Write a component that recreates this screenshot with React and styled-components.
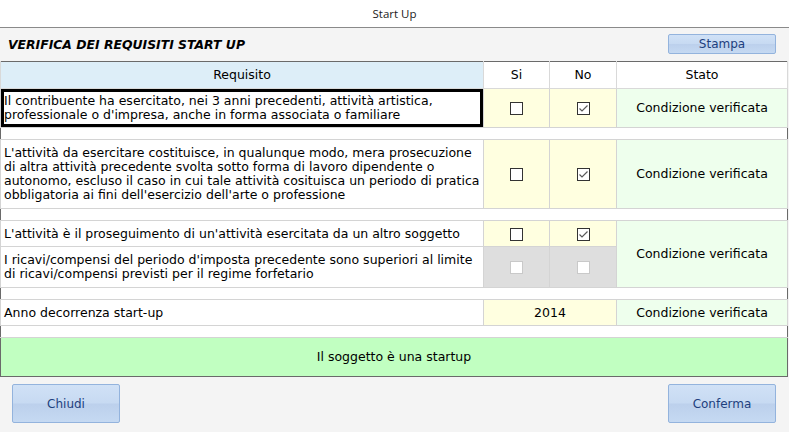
import React from "react";
import styled, { createGlobalStyle } from "styled-components";

const GlobalStyle = createGlobalStyle`
  body {
    margin: 0;
    background: #f4f4f4;
    font-family: "DejaVu Sans", Verdana, sans-serif;
    color: #000;
  }
`;

const Window = styled.div`
  width: 789px;
  height: 432px;
  display: flex;
  flex-direction: column;
  background: #f4f4f4;
  overflow: hidden;
`;

const TitleBar = styled.div`
  height: 27px;
  background: #fff;
  border-bottom: 1px solid #8a8a8a;
  display: flex;
  align-items: center;
  justify-content: center;
  font-family: "Open Sans", "Noto Sans", sans-serif;
  font-size: 11.5px;
  color: #222;
`;

const Toolbar = styled.div`
  height: 32px;
  display: flex;
  align-items: center;
  justify-content: space-between;
  padding: 0 13px 1px 8px;
`;

const Heading = styled.h1`
  margin: 0;
  font-size: 12.4px;
  font-weight: 700;
  font-style: italic;
`;

const Button = styled.button`
  width: ${(p) => p.$w || 108}px;
  height: ${(p) => p.$h || 20}px;
  padding: 0;
  border: 1px solid #93b3dd;
  border-radius: 2px;
  background: linear-gradient(#d0e1f6 0%, #c7daf2 48%, #bcd0ec 52%, #c5d9f2 100%);
  font-family: "DejaVu Sans", Verdana, sans-serif;
  font-size: 12px;
  color: #1d3f7e;
  cursor: pointer;
`;

const Grid = styled.table`
  width: 788px;
  border-collapse: collapse;
  table-layout: fixed;
  border: 1px solid #6a6a6a;
  background: #fff;
  font-size: 12.5px;
  line-height: 14px;
`;

const HeadCell = styled.th`
  height: 26px;
  padding: 0;
  font-weight: 400;
  background: ${(p) => p.$bg || "#fff"};
  border: 1px solid #d9d9d9;
  border-top: none;
`;

const Cell = styled.td`
  height: ${(p) => p.$h}px;
  padding: 0 0 0 3px;
  border: 1px solid #d4d4d4;
  white-space: nowrap;
  vertical-align: middle;
  box-shadow: ${(p) => (p.$focused ? "inset 0 0 0 3px #000" : "none")};
`;

const CheckCell = styled.td`
  padding: 0;
  border: 1px solid #d4d4d4;
  text-align: center;
  vertical-align: middle;
  background: ${(p) => (p.$disabled ? "#dedede" : "#ffffe0")};
`;

const StatusCell = styled.td`
  padding: 0;
  border: 1px solid #d4d4d4;
  text-align: center;
  vertical-align: middle;
  background: #eeffed;
`;

const YearCell = styled(CheckCell)``;

const Spacer = styled.td`
  height: 11px;
  padding: 0;
  border: 1px solid #d4d4d4;
  border-left: none;
  border-right: none;
`;

const Banner = styled.td`
  height: 38px;
  padding: 0;
  text-align: center;
  vertical-align: middle;
  background: #c1ffc1;
  border-top: 1px solid #d4d4d4;
`;

const Box = styled.span`
  display: inline-flex;
  width: 13px;
  height: 13px;
  box-sizing: border-box;
  border: 1px solid ${(p) => (p.$disabled ? "#c9c9c9" : "#333")};
  background: #fff;
  vertical-align: middle;
  align-items: center;
  justify-content: center;
`;

const Footer = styled.div`
  display: flex;
  justify-content: space-between;
  padding: 7px 13px 0 12px;
`;

function Check({ checked, disabled }) {
  return (
    <Box $disabled={disabled}>
      {checked && (
        <svg width="11" height="11" viewBox="0 0 11 11">
          <path d="M1.5 5.5 L4 8 L9.5 2.5" fill="none" stroke="#5a5a5a" strokeWidth="1.2" />
        </svg>
      )}
    </Box>
  );
}

const OK = "Condizione verificata";

export default function App() {
  return (
    <Window>
      <GlobalStyle />
      <TitleBar>Start Up</TitleBar>
      <Toolbar>
        <Heading>VERIFICA DEI REQUISITI START UP</Heading>
        <Button>Stampa</Button>
      </Toolbar>
      <Grid>
        <colgroup>
          <col style={{ width: 483 }} />
          <col style={{ width: 66 }} />
          <col style={{ width: 67 }} />
          <col />
        </colgroup>
        <thead>
          <tr>
            <HeadCell $bg="#ddeef8">Requisito</HeadCell>
            <HeadCell>Si</HeadCell>
            <HeadCell>No</HeadCell>
            <HeadCell>Stato</HeadCell>
          </tr>
        </thead>
        <tbody>
          <tr>
            <Cell $h={38} $focused>
              Il contribuente ha esercitato, nei 3 anni precedenti, attività artistica,
              <br />
              professionale o d'impresa, anche in forma associata o familiare
            </Cell>
            <CheckCell><Check /></CheckCell>
            <CheckCell><Check checked /></CheckCell>
            <StatusCell>{OK}</StatusCell>
          </tr>
          <tr><Spacer colSpan={4} /></tr>
          <tr>
            <Cell $h={68}>
              L'attività da esercitare costituisce, in qualunque modo, mera prosecuzione
              <br />
              di altra attività precedente svolta sotto forma di lavoro dipendente o
              <br />
              autonomo, escluso il caso in cui tale attività cosituisca un periodo di pratica
              <br />
              obbligatoria ai fini dell'esercizio dell'arte o professione
            </Cell>
            <CheckCell><Check /></CheckCell>
            <CheckCell><Check checked /></CheckCell>
            <StatusCell>{OK}</StatusCell>
          </tr>
          <tr><Spacer colSpan={4} /></tr>
          <tr>
            <Cell $h={25}>L'attività è il proseguimento di un'attività esercitata da un altro soggetto</Cell>
            <CheckCell><Check /></CheckCell>
            <CheckCell><Check checked /></CheckCell>
            <StatusCell rowSpan={2}>{OK}</StatusCell>
          </tr>
          <tr>
            <Cell $h={40}>
              I ricavi/compensi del periodo d'imposta precedente sono superiori al limite
              <br />
              di ricavi/compensi previsti per il regime forfetario
            </Cell>
            <CheckCell $disabled><Check disabled /></CheckCell>
            <CheckCell $disabled><Check disabled /></CheckCell>
          </tr>
          <tr><Spacer colSpan={4} /></tr>
          <tr>
            <Cell $h={25}>Anno decorrenza start-up</Cell>
            <YearCell colSpan={2}>2014</YearCell>
            <StatusCell>{OK}</StatusCell>
          </tr>
          <tr><Spacer colSpan={4} /></tr>
          <tr>
            <Banner colSpan={4}>Il soggetto è una startup</Banner>
          </tr>
        </tbody>
      </Grid>
      <Footer>
        <Button $h={39}>Chiudi</Button>
        <Button $h={39}>Conferma</Button>
      </Footer>
    </Window>
  );
}
